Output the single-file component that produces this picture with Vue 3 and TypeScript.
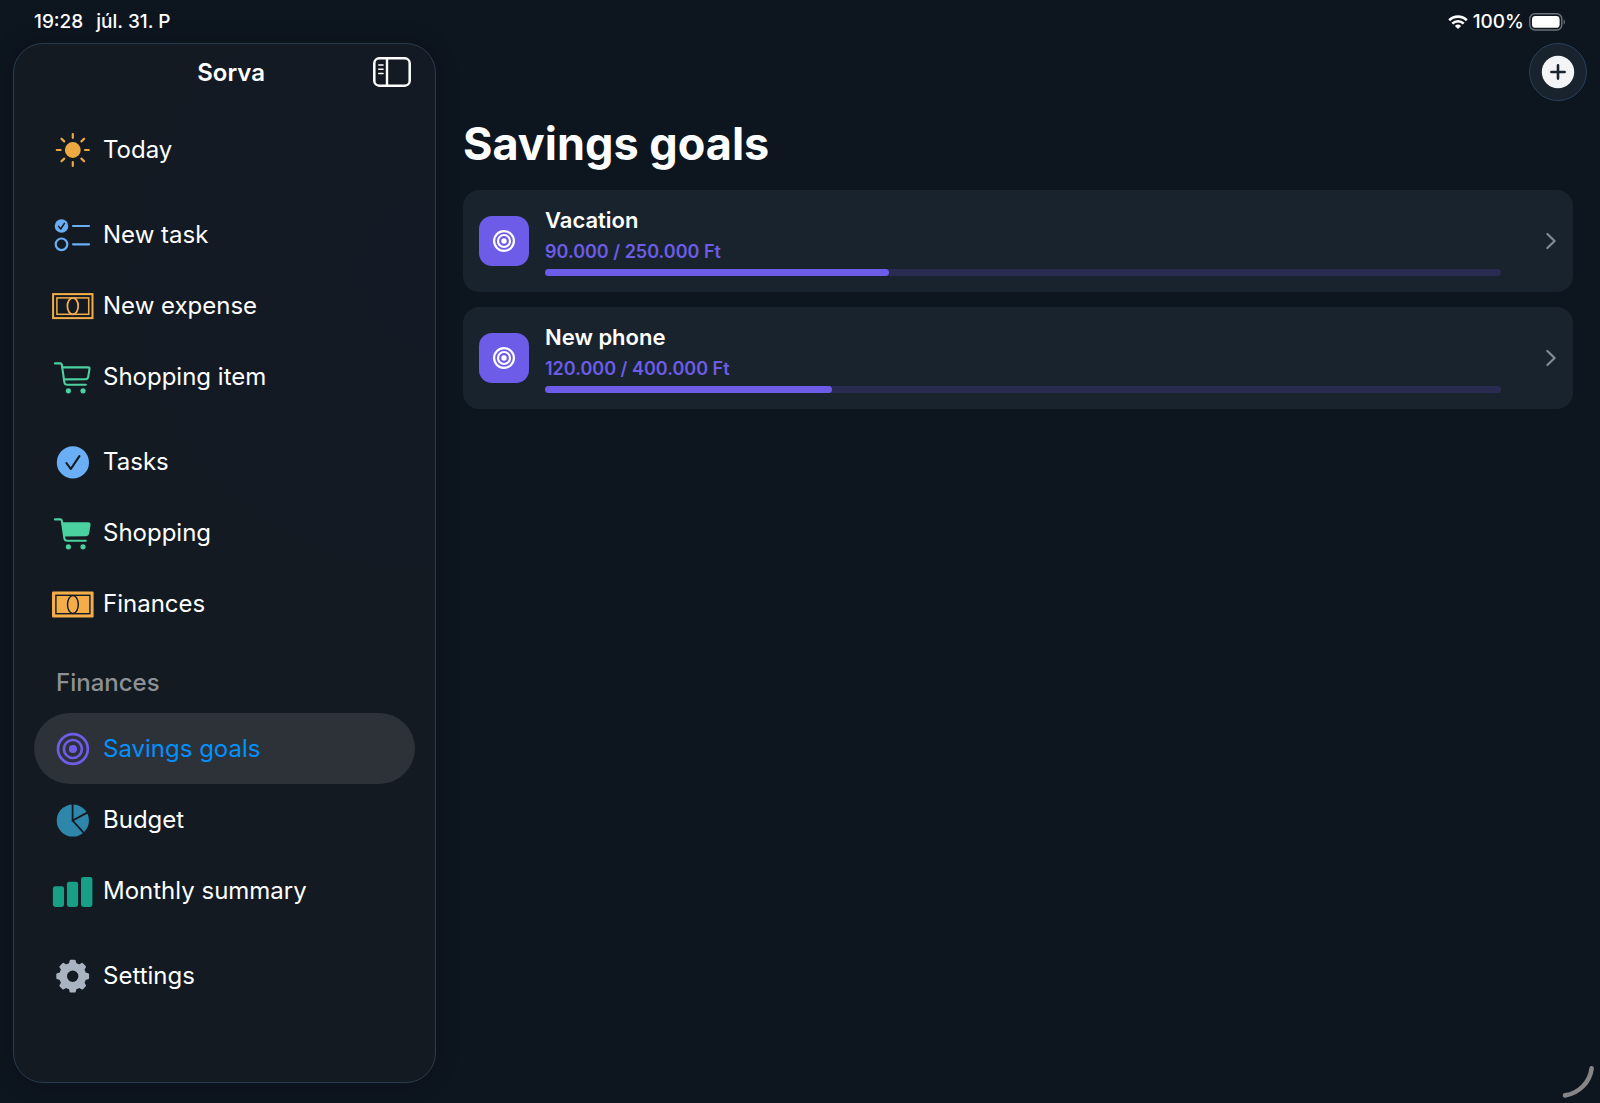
<script setup lang="ts">
interface NavItem {
  label: string
  icon: string
  color: string
  active?: boolean
}

interface NavGroup {
  title?: string
  items: NavItem[]
}

interface Goal {
  name: string
  saved: number
  target: number
}

const groups: NavGroup[] = [
  { items: [{ label: 'Today', icon: 'sun', color: '#eda941' }] },
  {
    items: [
      { label: 'New task', icon: 'checklist', color: '#6aaef5' },
      { label: 'New expense', icon: 'cash', color: '#f3ae4a' },
      { label: 'Shopping item', icon: 'cart', color: '#4bd1a0' },
    ],
  },
  {
    items: [
      { label: 'Tasks', icon: 'check', color: '#6aaef5' },
      { label: 'Shopping', icon: 'cart-fill', color: '#4bd1a0' },
      { label: 'Finances', icon: 'cash-fill', color: '#f3ae4a' },
    ],
  },
  {
    title: 'Finances',
    items: [
      { label: 'Savings goals', icon: 'target', color: '#6f5ce7', active: true },
      { label: 'Budget', icon: 'pie', color: '#2e86ab' },
      { label: 'Monthly summary', icon: 'bars', color: '#17a085' },
    ],
  },
  { items: [{ label: 'Settings', icon: 'gear', color: '#a9b4c0' }] },
]

const goals: Goal[] = [
  { name: 'Vacation', saved: 90000, target: 250000 },
  { name: 'New phone', saved: 120000, target: 400000 },
]

const eighths = [0, 45, 90, 135, 180, 225, 270, 315]

function amount(value: number): string {
  return String(value).replace(/\B(?=(\d{3})+$)/g, '.')
}

function percent(goal: Goal): number {
  return (goal.saved / goal.target) * 100
}
</script>

<template>
  <div class="app">
    <header class="status">
      <div class="status-side">
        <span>19:28</span>
        <span>júl. 31. P</span>
      </div>
      <div class="status-side status-right">
        <svg width="20" height="16" viewBox="0 0 20 16" fill="none" stroke="#fff" stroke-width="2.6" aria-hidden="true">
          <path d="M1.2 6.2a12.6 12.6 0 0 1 17.6 0" />
          <path d="M4.3 9.6a8.2 8.2 0 0 1 11.4 0" />
          <path d="M10 15 6.9 11.9a4.5 4.5 0 0 1 6.2 0Z" fill="#fff" stroke="none" />
        </svg>
        <span>100%</span>
        <svg width="37" height="18" viewBox="0 0 37 18" aria-hidden="true">
          <rect x=".8" y=".8" width="32" height="16.2" rx="5" fill="none" stroke="#6d737b" stroke-width="1.4" />
          <rect x="3" y="3" width="27.6" height="11.8" rx="3.4" fill="#fff" />
          <path d="M34.6 6.2c1.7.6 1.7 4.8 0 5.4Z" fill="#6d737b" />
        </svg>
      </div>
    </header>

    <div class="body">
      <aside class="sidebar">
        <div class="sidebar-head">
          <strong class="brand">Sorva</strong>
          <button class="toggle" type="button" aria-label="Toggle sidebar">
            <svg width="38" height="30" viewBox="0 0 38 30" fill="none" stroke="#fff" aria-hidden="true">
              <rect x="1.3" y="1.3" width="35.4" height="27.4" rx="5" stroke-width="2.5" />
              <path d="M14 1.5v27" stroke-width="2.4" />
              <path d="M5.8 8h4.2M5.800 12.300h4.200M5.800 16.500h4.200" stroke-width="1.6" stroke-linecap="round" />
            </svg>
          </button>
        </div>

        <nav class="nav">
          <section v-for="(group, index) in groups" :key="index">
            <h2 v-if="group.title" class="group-title">{{ group.title }}</h2>
            <a
              v-for="item in group.items"
              :key="item.label"
              href="#"
              class="item"
              :class="{ active: item.active }"
              :aria-current="item.active ? 'page' : undefined"
            >
              <svg class="icon" viewBox="0 0 42 36" :style="{ color: item.color }" aria-hidden="true">
                <g v-if="item.icon === 'sun'">
                  <circle cx="20.8" cy="18" r="7.9" fill="currentColor" />
                  <path
                    v-for="angle in eighths"
                    :key="angle"
                    d="M20.8 5.8v-3.8"
                    :transform="`rotate(${angle} 20.8 18)`"
                    stroke="currentColor"
                    stroke-width="2.2"
                    stroke-linecap="round"
                  />
                </g>
                <g v-else-if="item.icon === 'checklist'" fill="none" stroke="currentColor" stroke-width="2.2" stroke-linecap="round" stroke-linejoin="round">
                  <circle cx="9.5" cy="9" r="6.8" fill="currentColor" stroke="none" />
                  <path d="m6.6 9.4 2.1 2.6 3.7-5.6" stroke="#131a21" stroke-width="1.5" />
                  <circle cx="9.5" cy="27.3" r="5.8" />
                  <path d="M21 9h16M21 27.3h16" />
                </g>
                <g v-else-if="item.icon === 'cash'" fill="none" stroke="currentColor">
                  <rect x="1.1" y="6.1" width="39.4" height="24" stroke-width="2" />
                  <rect x="4.9" y="9.9" width="31.800" height="16.4" stroke-width="1.5" />
                  <ellipse cx="20.8" cy="18.1" rx="5.4" ry="8.2" stroke-width="1.8" />
                </g>
                <g v-else-if="item.icon === 'cash-fill'">
                  <rect y="5.4" width="41.6" height="26.2" rx="1" fill="currentColor" />
                  <g fill="none" stroke="#131a21" stroke-width="1.4">
                    <rect x="3.9" y="9.3" width="34" height="18.4" />
                    <ellipse cx="20.9" cy="18.5" rx="5.4" ry="9" />
                  </g>
                </g>
                <g v-else-if="item.icon === 'cart' || item.icon === 'cart-fill'" fill="none" stroke="currentColor" stroke-width="2.1" stroke-linecap="round" stroke-linejoin="round">
                  <path d="M3 4.4h5.4q1.2 0 1.4 1.2l2.6 17.8q.4 2.4 2.8 2.4h18.6" />
                  <path
                    d="M10.3 8.4h26q1.4 0 1.2 1.4l-1.3 8q-.3 2.2-2.5 2.3l-21.6.3"
                    :fill="item.icon === 'cart-fill' ? 'currentColor' : 'none'"
                  />
                  <circle cx="16.4" cy="31.8" r="2.6" fill="currentColor" stroke="none" />
                  <circle cx="31" cy="31.8" r="2.6" fill="currentColor" stroke="none" />
                </g>
                <g v-else-if="item.icon === 'check'">
                  <circle cx="20.9" cy="18.4" r="16.1" fill="currentColor" />
                  <path d="m14.400 19 4.400 6 8.600-12.800" fill="none" stroke="#131a21" stroke-width="2.1" stroke-linecap="round" stroke-linejoin="round" />
                </g>
                <g v-else-if="item.icon === 'target'" fill="none" stroke="currentColor" stroke-width="2.7">
                  <circle cx="20.9" cy="18" r="14.9" />
                  <circle cx="20.9" cy="18" r="9" />
                  <circle cx="20.9" cy="18" r="4.1" fill="currentColor" stroke="none" />
                </g>
                <g v-else-if="item.icon === 'pie'">
                  <circle cx="20.8" cy="18.5" r="16.1" fill="currentColor" />
                  <path d="M20.6 1.5v17l15.6-8.4M20.6 18.5l11.6 12.9" fill="none" stroke="#131a21" stroke-width="1.8" />
                </g>
                <g v-else-if="item.icon === 'bars'" fill="currentColor">
                  <rect x=".9" y="13.2" width="11.2" height="20.8" rx="2.4" />
                  <rect x="14.9" y="8.8" width="11.2" height="25.2" rx="2.4" />
                  <rect x="29" y="4.1" width="11.4" height="29.9" rx="2.4" />
                </g>
                <g v-else fill="none" stroke="currentColor">
                  <circle cx="20.7" cy="18.2" r="9.6" stroke-width="7.8" />
                  <path
                    v-for="angle in eighths"
                    :key="angle"
                    d="m18.1 6 .7-3h3.800l.7 3Z"
                    :transform="`rotate(${angle} 20.7 18.2)`"
                    fill="currentColor"
                    stroke-width="2.4"
                    stroke-linejoin="round"
                  />
                </g>
              </svg>
              <span>{{ item.label }}</span>
            </a>
          </section>
        </nav>
      </aside>

      <main class="main">
        <div class="toolbar">
          <button class="add" type="button" aria-label="Add savings goal">
            <svg width="34" height="34" viewBox="0 0 34 34" aria-hidden="true">
              <circle cx="17" cy="17" r="16.2" fill="#f3f4f6" />
              <path d="M17 10.4v13.2M10.4 17h13.2" stroke="#1a242e" stroke-width="2.6" stroke-linecap="round" />
            </svg>
          </button>
        </div>

        <h1 class="title">Savings goals</h1>

        <ul class="goals">
          <li v-for="goal in goals" :key="goal.name">
            <a href="#" class="goal">
              <span class="badge">
                <svg width="24" height="24" viewBox="0 0 24 24" fill="none" stroke="#fff" stroke-width="2.2" aria-hidden="true">
                  <circle cx="12" cy="12" r="9.9" />
                  <circle cx="12" cy="12" r="6" />
                  <circle cx="12" cy="12" r="2.7" fill="#fff" stroke="none" />
                </svg>
              </span>
              <span class="goal-info">
                <span class="goal-name">{{ goal.name }}</span>
                <span class="goal-amount">{{ amount(goal.saved) }} / {{ amount(goal.target) }} Ft</span>
                <span
                  class="track"
                  role="progressbar"
                  :aria-label="goal.name"
                  aria-valuemin="0"
                  aria-valuemax="100"
                  :aria-valuenow="percent(goal)"
                >
                  <span class="fill" :style="{ width: percent(goal) + '%' }"></span>
                </span>
              </span>
              <svg class="chevron" width="12" height="18" viewBox="0 0 12 18" fill="none" stroke="#838b95" stroke-width="2.2" stroke-linecap="round" stroke-linejoin="round" aria-hidden="true">
                <path d="m2.4 2 7.2 7-7.2 7" />
              </svg>
            </a>
          </li>
        </ul>
      </main>
    </div>

    <svg class="corner" width="34" height="34" viewBox="0 0 34 34" fill="none" stroke="#868686" stroke-width="4.6" stroke-linecap="round" aria-hidden="true">
      <path d="M30.6 3.4C29 17 18 28.4 4 30.4" />
    </svg>
  </div>
</template>

<style>
body {
  background: #0d151f;
}
</style>

<style scoped>
.app {
  position: relative;
  display: flex;
  flex-direction: column;
  min-height: 100vh;
  box-sizing: border-box;
  color: #fff;
  background: #0d151f;
  font-family: Inter, 'Liberation Sans', sans-serif;
}

.status {
  display: flex;
  justify-content: space-between;
  height: 43px;
  padding: 0 34px;
  font-size: 19px;
  font-weight: 500;
}

.status-side {
  display: flex;
  align-items: center;
  gap: 13px;
}

.status-right {
  gap: 5px;
}

.body {
  flex: 1;
  display: flex;
  gap: 27px;
  padding: 0 13px 20px;
}

.sidebar {
  flex: none;
  width: 423px;
  box-sizing: border-box;
  border: 1px solid #2a3b4d;
  border-radius: 30px;
  background: radial-gradient(circle at 100% 22%, #131a25, #131a21 60%);
  box-shadow: 0 0 24px rgba(4, 8, 16, 0.2);
}

.sidebar-head {
  display: flex;
  align-items: center;
  justify-content: flex-end;
  gap: 108px;
  height: 56px;
  margin: 0 24px 14px;
}

.brand {
  font-size: 24px;
  font-weight: 600;
}

.toggle,
.add {
  display: flex;
  align-items: center;
  justify-content: center;
  padding: 0;
  border: 0;
  background: none;
  cursor: pointer;
}

.nav {
  display: flex;
  flex-direction: column;
  gap: 14px;
  padding: 0 20px;
}

.group-title {
  height: 60px;
  margin: 0;
  padding-left: 22px;
  font-size: 24px;
  font-weight: 500;
  line-height: 60px;
  color: #8d9197;
}

.item {
  display: flex;
  align-items: center;
  gap: 9px;
  height: 71px;
  padding: 0 18px;
  border-radius: 36px;
  font-size: 24px;
  color: #fff;
  text-decoration: none;
}

.item.active {
  background: #2d3138;
  color: #0091ff;
}

.icon {
  flex: none;
  width: 42px;
  height: 36px;
}

.main {
  flex: 1;
  min-width: 0;
}

.toolbar {
  display: flex;
  justify-content: flex-end;
}

.add {
  width: 58px;
  height: 58px;
  border: 1px solid #29405c;
  border-radius: 50%;
  background: #18232d;
}

.title {
  margin: 15px 0 18px;
  font-size: 45px;
  font-weight: 700;
  line-height: 56px;
}

.goals {
  display: flex;
  flex-direction: column;
  gap: 15px;
  margin: 0 14px 0 0;
  padding: 0;
  list-style: none;
}

.goal {
  display: flex;
  align-items: center;
  padding: 16px;
  border-radius: 16px;
  background: #19232d;
  color: #fff;
  text-decoration: none;
}

.badge {
  display: flex;
  align-items: center;
  justify-content: center;
  flex: none;
  width: 50px;
  height: 50px;
  border-radius: 13px;
  background: #6c5ce7;
}

.goal-info {
  flex: 1;
  display: flex;
  flex-direction: column;
  margin: 0 44px 0 16px;
}

.goal-name {
  font-size: 22px;
  font-weight: 600;
  line-height: 28px;
}

.goal-amount {
  margin: 6px 0 5px;
  font-size: 18px;
  font-weight: 600;
  line-height: 24px;
  color: #6c5ce7;
}

.track {
  height: 7px;
  border-radius: 4px;
  background: #292c50;
}

.fill {
  display: block;
  height: 7px;
  border-radius: 4px;
  background: #6c5ce7;
}

.chevron {
  flex: none;
}

.corner {
  position: absolute;
  right: 5px;
  bottom: 4px;
}
</style>
